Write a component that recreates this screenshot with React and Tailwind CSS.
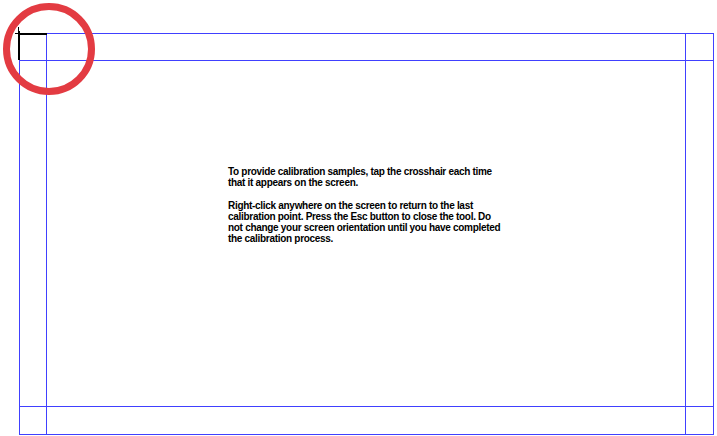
import React from 'react';

const App = () => {
  return (
    <div className="relative w-[717px] h-[436px] bg-white overflow-hidden">
      <div className="pl-[19px] pt-[33px]">
        <div className="grid grid-cols-[26px_638px_27px] grid-rows-[26px_345px_27px] gap-px w-[695px] h-[402px] border border-[#4040ff] bg-[#4040ff]">
          <div className="bg-white"></div>
          <div className="bg-white"></div>
          <div className="bg-white"></div>
          <div className="bg-white"></div>
          <div className="bg-white pt-[105px] pl-[181px] text-black font-bold text-[10px] leading-[11px] tracking-[-0.3px] font-['Liberation_Sans',Arial,sans-serif]">
            <p className="w-[320px] whitespace-nowrap">
              To provide calibration samples, tap the crosshair each time<br />
              that it appears on the screen.
            </p>
            <p className="w-[320px] mt-[12px] whitespace-nowrap">
              Right-click anywhere on the screen to return to the last<br />
              calibration point. Press the Esc button to close the tool. Do<br />
              not change your screen orientation until you have completed<br />
              the calibration process.
            </p>
          </div>
          <div className="bg-white"></div>
          <div className="bg-white"></div>
          <div className="bg-white"></div>
          <div className="bg-white"></div>
        </div>
      </div>

      {/* crosshair */}
      <div className="absolute left-[18px] top-[31px] w-[2px] h-[29px] bg-black"></div>
      <div className="absolute left-[18px] top-[33px] w-[29px] h-[2px] bg-black"></div>
      <div className="absolute left-[18px] top-[27px] w-[1px] h-[4px] bg-black"></div>
      <div className="absolute left-[15px] top-[33px] w-[3px] h-[1px] bg-black"></div>

      {/* highlight ring */}
      <div className="absolute left-[3px] top-[3px] w-[92px] h-[92px] rounded-full border-[7px] border-[#e33b42]"></div>
    </div>
  );
};

export default App;
